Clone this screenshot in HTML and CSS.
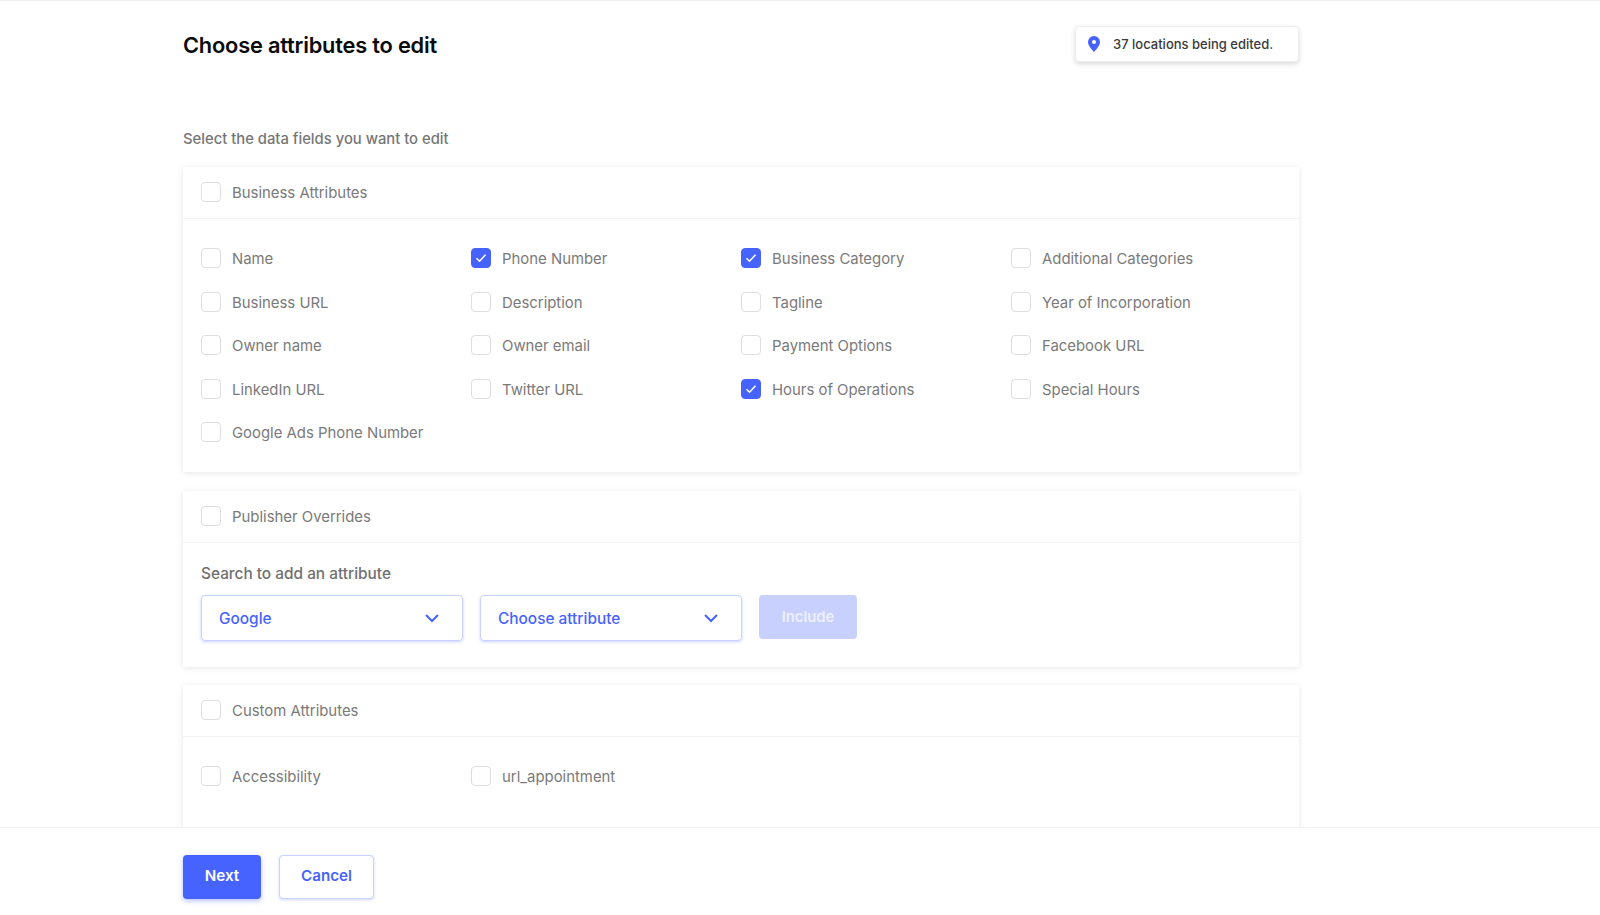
FILE: index.html
```html
<!DOCTYPE html>
<html lang="en">
<head>
  <meta charset="UTF-8">
  <title>Choose attributes to edit</title>
  <link rel="stylesheet" href="styles.css">
</head>
<body>
  <div class="page">
    <div class="content">
      <div class="head">
        <h1 class="title">Choose attributes to edit</h1>
        <div class="badge">
          <svg class="pin" width="12" height="16" viewBox="0 0 12 16"><path fill="#4763ff" fill-rule="evenodd" d="M6 0a6 6 0 0 1 6 6c0 3.6-3.6 7.4-6 10C3.600 13.400 0 9.600 0 6a6 6 0 0 1 6-6zm0 4a2 2 0 1 0 0 4 2 2 0 0 0 0-4z"/></svg>
          <span>37 locations being edited.</span>
        </div>
      </div>

      <div class="subtitle">Select the data fields you want to edit</div>

      <!-- Business attributes -->
      <div class="card">
        <div class="card-head">
          <label class="check"><span class="box"></span>Business Attributes</label>
        </div>
        <div class="fields">
          <label class="check"><span class="box"></span>Name</label>
          <label class="check"><span class="box on"><svg width="12" height="10" viewBox="0 0 12 10"><path d="M1.500 5.200l3 3 6-6.500" fill="none" stroke="#fff" stroke-width="1.500"/></svg></span>Phone Number</label>
          <label class="check"><span class="box on"><svg width="12" height="10" viewBox="0 0 12 10"><path d="M1.500 5.200l3 3 6-6.500" fill="none" stroke="#fff" stroke-width="1.500"/></svg></span>Business Category</label>
          <label class="check"><span class="box"></span>Additional Categories</label>
          <label class="check"><span class="box"></span>Business URL</label>
          <label class="check"><span class="box"></span>Description</label>
          <label class="check"><span class="box"></span>Tagline</label>
          <label class="check"><span class="box"></span>Year of Incorporation</label>
          <label class="check"><span class="box"></span>Owner name</label>
          <label class="check"><span class="box"></span>Owner email</label>
          <label class="check"><span class="box"></span>Payment Options</label>
          <label class="check"><span class="box"></span>Facebook URL</label>
          <label class="check"><span class="box"></span>LinkedIn URL</label>
          <label class="check"><span class="box"></span>Twitter URL</label>
          <label class="check"><span class="box on"><svg width="12" height="10" viewBox="0 0 12 10"><path d="M1.500 5.200l3 3 6-6.500" fill="none" stroke="#fff" stroke-width="1.500"/></svg></span>Hours of Operations</label>
          <label class="check"><span class="box"></span>Special Hours</label>
          <label class="check"><span class="box"></span>Google Ads Phone Number</label>
        </div>
      </div>

      <!-- Publisher overrides -->
      <div class="card card-overrides">
        <div class="card-head">
          <label class="check"><span class="box"></span>Publisher Overrides</label>
        </div>
        <div class="overrides">
          <div class="search-label">Search to add an attribute</div>
          <div class="search-row">
            <div class="select">Google
              <svg width="14" height="9" viewBox="0 0 14 9"><path d="M1 1l6 6 6-6" fill="none" stroke="#4763ff" stroke-width="2"/></svg>
            </div>
            <div class="select">Choose attribute
              <svg width="14" height="9" viewBox="0 0 14 9"><path d="M1 1l6 6 6-6" fill="none" stroke="#4763ff" stroke-width="2"/></svg>
            </div>
            <button class="include">Include</button>
          </div>
        </div>
      </div>

      <!-- Custom attributes -->
      <div class="card">
        <div class="card-head">
          <label class="check"><span class="box"></span>Custom Attributes</label>
        </div>
        <div class="fields fields-tall">
          <label class="check"><span class="box"></span>Accessibility</label>
          <label class="check"><span class="box"></span>url_appointment</label>
        </div>
      </div>
    </div>

    <div class="footer">
      <button class="btn primary">Next</button>
      <button class="btn ghost">Cancel</button>
    </div>
  </div>
</body>
</html>
```

FILE: styles.css
```css
* { box-sizing: border-box; }
html, body {
  margin: 0;
  padding: 0;
  height: 100%;
  overflow: hidden;
  background: #fff;
  font-family: Inter, 'Noto Sans', sans-serif;
}

.page {
  height: 915px;
  display: flex;
  flex-direction: column;
  border-top: 1px solid #f0f0f0;
}

.content {
  flex: 1;
  min-height: 0;
  overflow: hidden;
  padding: 26px 301px 0 183px;
}

.head {
  display: flex;
  justify-content: space-between;
  align-items: center;
  height: 35px;
}

.title {
  margin: 0;
  font-size: 21.800px;
  font-weight: 600;
  letter-spacing: -0.2px;
  color: #0b0b0b;
}

.badge {
  width: 224px;
  height: 36px;
  margin-top: -1px;
  display: flex;
  align-items: center;
  padding-left: 12px;
  border: 1px solid #eee;
  border-radius: 4px;
  background: #fff;
  box-shadow: 0 2px 5px rgba(0, 0, 0, 0.15);
  font-size: 13px;
  font-weight: 500;
  color: #3a3a3a;
}

.pin { margin-right: 13px; }

.subtitle {
  margin-top: 67px;
  margin-bottom: 18px;
  font-size: 14.800px;
  line-height: 20px;
  font-weight: 500;
  color: #767676;
}

.card {
  margin-bottom: 19px;
  background: #fff;
  box-shadow: 0 1px 6px rgba(0, 0, 0, 0.1);
}

.card-overrides { margin-bottom: 18px; }

.card-head {
  height: 52px;
  display: flex;
  align-items: center;
  padding-left: 18px;
  border-bottom: 1px solid #f3f3f3;
}

.check {
  display: flex;
  align-items: center;
  font-size: 14.900px;
  color: #7a7a7a;
}

.box {
  width: 20px;
  height: 20px;
  flex: none;
  margin-top: -2px;
  margin-right: 11px;
  display: flex;
  align-items: center;
  justify-content: center;
  background: #fff;
  border: 1px solid #dedede;
  border-radius: 4px;
}

.box.on {
  background: #4763ff;
  border-color: #4763ff;
}

.fields {
  display: grid;
  grid-template-columns: repeat(4, 270px);
  grid-auto-rows: 20px;
  row-gap: 23.600px;
  padding: 30px 18px 29px;
}

.fields-tall { padding-bottom: 70px; }

.overrides { padding: 21px 18px 26px; }

.search-label {
  font-size: 15.400px;
  line-height: 20px;
  font-weight: 500;
  color: #707070;
  margin-bottom: 11px;
}

.search-row {
  display: flex;
  align-items: flex-start;
  gap: 17px;
}

.select {
  width: 262px;
  height: 46px;
  display: flex;
  align-items: center;
  justify-content: space-between;
  padding: 0 23px 0 17px;
  border: 1px solid #c9d1ff;
  border-radius: 4px;
  box-shadow: 0 1px 3px rgba(71, 99, 255, 0.3);
  font-size: 15.400px;
  font-weight: 500;
  color: #4763ff;
}

.include {
  width: 98px;
  height: 44px;
  border: none;
  border-radius: 4px;
  background: #c8d0fd;
  color: #eef0ff;
  font-family: inherit;
  font-size: 14.800px;
  font-weight: 600;
}

.footer {
  position: relative;
  height: 88px;
  flex: none;
  display: flex;
  align-items: flex-start;
  gap: 18px;
  padding: 27px 0 0 183px;
  background: #fff;
  border-top: 1px solid #f0f0f0;
}

.btn {
  height: 44px;
  padding: 0 0 3px;
  border-radius: 4px;
  font-family: inherit;
  font-size: 15.200px;
  font-weight: 600;
}

.primary {
  width: 78px;
  border: none;
  background: #4763ff;
  color: #fff;
  box-shadow: 0 2px 5px rgba(71, 99, 255, 0.4);
}

.ghost {
  width: 95px;
  border: 1px solid #c9d1ff;
  background: #fff;
  color: #4763ff;
  box-shadow: 0 1px 3px rgba(71, 99, 255, 0.25);
}
```
